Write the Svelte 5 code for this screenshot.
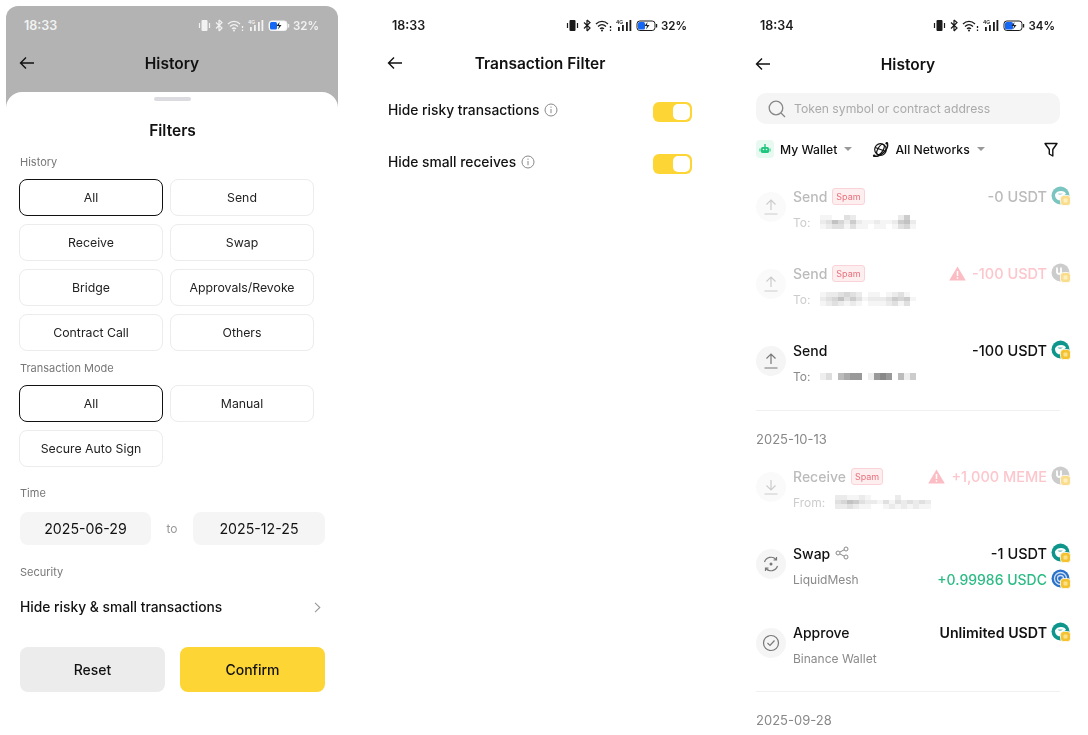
<script>
	const historyTypes = ['All', 'Send', 'Receive', 'Swap', 'Bridge', 'Approvals/Revoke', 'Contract Call', 'Others'];
	const modes = ['All', 'Manual', 'Secure Auto Sign'];
	const toggles = [
		{ label: 'Hide risky transactions', on: true },
		{ label: 'Hide small receives', on: true }
	];

	const UP = 'M9 13V3M4.5 7.5 9 3l4.5 4.5M2.5 17h13';
	const DOWN = 'M9 3v10M4.5 8.5 9 13l4.5-4.5M2.5 17h13';

	const rowsA = [
		{ title: 'Send', spam: true, icon: UP, to: 'To:', amount: '-0 USDT', tone: 'grey', token: 'teal', dim: true,
			mosaic: ['1100320000000250', '2364252112112562', '1233131101101341'], cell: 6 },
		{ title: 'Send', spam: true, icon: UP, to: 'To:', amount: '-100 USDT', tone: 'pink', warn: true, token: 'grey', dim: true,
			mosaic: ['1223432011012310', '2346353122235451', '1232121011123130'], cell: 6 },
		{ title: 'Send', icon: UP, to: 'To:', amount: '-100 USDT', tone: 'dark', token: 'teal',
			mosaic: ['1204566016760413', '1204566016760413'], cell: 6, thin: true }
	];

	const rowsB = [
		{ title: 'Receive', spam: true, icon: DOWN, to: 'From:', amount: '+1,000 MEME', tone: 'pink', warn: true, token: 'grey', dim: true,
			mosaic: ['2211210000200000', '3465322131323232', '2232110012121211'], cell: 6 }
	];
</script>

{#snippet status(time, pct, fill)}
	<div class="status">
		<span class="time">{time}</span>
		<div class="status-icons">
			<svg width="13" height="13" viewBox="0 0 13 13"><rect x="3.500" y="1" width="6" height="11" rx="1" fill="currentColor"/><path d="M1.500 4v5M11.500 4v5" stroke="currentColor" stroke-width="1.200"/></svg>
			<svg width="8" height="13" viewBox="0 0 8 13" fill="none" stroke="currentColor" stroke-width="1.200"><path d="M4 1v11M1 3.500l6 5.500-3 3M1 9.500l6-6-3-2.500"/></svg>
			<svg width="17" height="13" viewBox="0 0 17 13" fill="none" stroke="currentColor" stroke-width="1.300"><path d="M1 5c3.500-3.500 8.500-3.500 12 0M3 7.500c2.500-2.300 5.500-2.300 8 0M5 9.800c1.300-1 2.700-1 4 0"/><circle cx="7" cy="11.500" r="1" fill="currentColor" stroke="none"/><path d="M15.500 7v2M15.500 10.500v1.500"/></svg>
			<svg width="16" height="13" viewBox="0 0 16 13" fill="currentColor"><rect x="2" y="8" width="1.800" height="4"/><rect x="6" y="6" width="1.800" height="6"/><rect x="10" y="3" width="1.800" height="9"/><rect x="13.500" y="1" width="1.800" height="11"/><text x="0" y="5" class="g">4G</text></svg>
			<svg width="22" height="13" viewBox="0 0 22 13"><rect x="1" y="2" width="18" height="9.500" rx="2.800" fill="#fff" stroke="currentColor"/><rect x="2" y="3" width={fill} height="7.500" rx="1.500" fill="#1467f5"/><path d="M11.500 3 8.500 7H11L10 10.500 13.500 6H11z" fill="#222"/><rect x="20" y="5" width="1.200" height="3.500" fill="currentColor"/></svg>
			<span class="pct">{pct}</span>
		</div>
	</div>
{/snippet}

{#snippet nav(title)}
	<div class="nav">
		<svg class="back" width="16" height="14" viewBox="0 0 16 14" fill="none" stroke="#111" stroke-width="1.400"><path d="M15 7H1.500M7 1.500 1.500 7 7 12.500"/></svg>
		<h1>{title}</h1>
	</div>
{/snippet}

{#snippet token(kind, dim)}
	<svg class="token" class:dim width="20" height="20" viewBox="0 0 20 20">
		{#if kind === 'blue'}
			<circle cx="9.500" cy="9.500" r="9" fill="#2a71c9"/>
			<circle cx="9.500" cy="9.500" r="6" fill="none" stroke="#cfe0f5" stroke-width="1.300"/>
			<circle cx="9.500" cy="9.500" r="3" fill="none" stroke="#cfe0f5" stroke-width="1.300"/>
		{:else if kind === 'grey'}
			<circle cx="9.500" cy="9.500" r="9" fill="#a3a3a3"/>
			<path d="M6 4.500v5q2 3 4 0v-5" fill="none" stroke="#fff" stroke-width="1.800"/>
		{:else}
			<circle cx="9.500" cy="9.500" r="9" fill="#0f968c"/>
			<path d="M4 8.500C5 6 7.500 5 10 5s4.500 1 5 3l-4.500 2.500-2 4-1.500-.5C5 13 3.800 10.500 4 8.500z" fill="#fff"/>
			<path d="M6.500 7.500h5.500l-2 1.300H8z" fill="#5bb8b0"/>
		{/if}
		<rect x="9.500" y="9.500" width="10" height="10" rx="2.800" fill="#f4c22f" stroke="#fff" stroke-width=".8"/>
		<rect x="12.500" y="12.500" width="4" height="4" rx="1" fill="#fbe28a"/>
	</svg>
{/snippet}

{#snippet warning()}
	<svg width="17" height="15" viewBox="0 0 17 15"><path d="M8.500.5 16.800 14.500H.2z" fill="#fbbcc3"/><path d="M8.500 5v5M8.500 11.200v1.600" stroke="#fff" stroke-width="1.500"/></svg>
{/snippet}

{#snippet txRow(r)}
	<div class="tx" class:dim={r.dim}>
		<div class="tx-icon">
			<svg width="18" height="20" viewBox="0 0 18 20" fill="none" stroke="currentColor" stroke-width="1.200"><path d={r.icon}/></svg>
		</div>
		<div class="tx-body">
			<div class="tx-line">
				<span class="tx-title">{r.title}</span>
				{#if r.spam}<span class="spam">Spam</span>{/if}
				<span class="amount {r.tone}">
					{#if r.warn}{@render warning()}{/if}
					{r.amount}
				</span>
				{@render token(r.token, r.dim)}
			</div>
			<div class="tx-sub">
				<span>{r.to}</span>
				<div class="mosaic" class:thin={r.thin}>
					{#each r.mosaic as line}
						<div class="mosaic-line">
							{#each line.split('') as c}
								<i style="width:{r.cell}px;opacity:{Number(c) / 10}"></i>
							{/each}
						</div>
					{/each}
				</div>
			</div>
		</div>
	</div>
{/snippet}

<div class="page">
	<section class="phone filters">
		{@render status('18:33', '32%', 7)}
		{@render nav('History')}
		<div class="sheet">
			<div class="handle"></div>
			<h2>Filters</h2>
			<p class="label first">History</p>
			<div class="choices">
				{#each historyTypes as t, i}
					<button class:active={i === 0}>{t}</button>
				{/each}
			</div>
			<p class="label mode">Transaction Mode</p>
			<div class="choices">
				{#each modes as t, i}
					<button class:active={i === 0}>{t}</button>
				{/each}
			</div>
			<p class="label time-label">Time</p>
			<div class="dates">
				<span class="date">2025-06-29</span>
				<span class="to">to</span>
				<span class="date">2025-12-25</span>
			</div>
			<p class="label sec-label">Security</p>
			<div class="risk">
				<span>Hide risky &amp; small transactions</span>
				<svg width="7" height="11" viewBox="0 0 7 11" fill="none" stroke="#999" stroke-width="1.100"><path d="M1 .8 5.800 5.500 1 10.200"/></svg>
			</div>
			<div class="actions">
				<button class="reset">Reset</button>
				<button class="confirm">Confirm</button>
			</div>
		</div>
	</section>

	<section class="phone">
		{@render status('18:33', '32%', 7)}
		{@render nav('Transaction Filter')}
		<div class="toggles">
			{#each toggles as t}
				<div class="toggle-row">
					<span>{t.label}</span>
					<svg class="info" width="14" height="14" viewBox="0 0 14 14" fill="none" stroke="#888"><circle cx="7" cy="7" r="6"/><path d="M7 6v4.200M7 3.600v1.200"/></svg>
					<div class="toggle" class:on={t.on}><div class="knob"></div></div>
				</div>
			{/each}
		</div>
	</section>

	<section class="phone history">
		{@render status('18:34', '34%', 8)}
		{@render nav('History')}
		<div class="content">
			<div class="search">
				<svg width="18" height="18" viewBox="0 0 18 18" fill="none" stroke="#888" stroke-width="1.300"><circle cx="8" cy="8" r="6.800"/><path d="m13 13 4 4"/></svg>
				<span>Token symbol or contract address</span>
			</div>
			<div class="selectors">
				<span class="bot">
					<svg width="12" height="12" viewBox="0 0 12 12" fill="#1fc77e"><rect x="2" y="4" width="8" height="6" rx="1.500"/><rect x="5.300" y="1" width="1.400" height="3"/><rect x=".5" y="5.500" width="1" height="3"/><rect x="10.500" y="5.500" width="1" height="3"/><circle cx="4.500" cy="6.500" r=".8" fill="#e7f9f0"/><circle cx="7.500" cy="6.500" r=".8" fill="#e7f9f0"/></svg>
				</span>
				<span class="sel-label">My Wallet</span>
				<span class="caret"></span>
				<svg class="globe" width="17" height="17" viewBox="0 0 17 17" fill="none" stroke="#111" stroke-width="1.200"><circle cx="8.500" cy="8.500" r="5.800"/><ellipse cx="8.500" cy="8.500" rx="2.600" ry="5.800" transform="rotate(30 8.500 8.500)"/><path d="M3.200 6.500 13.800 10.500"/><path d="M1.800 14.800c2.500 1.500 7-.5 10-3.500s4.500-7 3.200-9.500" stroke-width="1.500"/><circle cx="14.800" cy="2.200" r="1.300" fill="#111" stroke="none"/><circle cx="2.200" cy="14.800" r="1.300" fill="#111" stroke="none"/></svg>
				<span class="sel-label">All Networks</span>
				<span class="caret"></span>
				<svg class="funnel" width="14" height="15" viewBox="0 0 14 15" fill="none" stroke="#111" stroke-width="1.400" stroke-linejoin="round"><path d="M1 1.500h12L8.800 7.500v6.500L5.300 12V7.500z"/></svg>
			</div>
			<div class="list top">
				{#each rowsA as r}
					{@render txRow(r)}
				{/each}
			</div>
			<div class="rule"></div>
			<p class="day">2025-10-13</p>
			<div class="list">
				{#each rowsB as r}
					{@render txRow(r)}
				{/each}

				<div class="tx swap">
					<div class="tx-icon">
						<svg width="20" height="20" viewBox="0 0 20 20" fill="none" stroke="currentColor" stroke-width="1.200"><path d="M3.500 8a6.800 6.800 0 0 1 11.500-2.500M16.500 12A6.800 6.800 0 0 1 5 14.500M15.500 3v3h-3M4.500 17v-3h3"/><circle cx="10" cy="10" r="1.500" fill="currentColor" stroke="none"/></svg>
					</div>
					<div class="tx-body">
						<div class="tx-line">
							<span class="tx-title">Swap</span>
							<svg class="share" width="14" height="14" viewBox="0 0 14 14" fill="none" stroke="#888"><circle cx="3" cy="7" r="2"/><circle cx="11" cy="3" r="2"/><circle cx="11" cy="11" r="2"/><path d="m5 6 4.200-2.200M5 8l4.200 2.200"/></svg>
							<span class="amount dark">-1 USDT</span>
							{@render token('teal', false)}
						</div>
						<div class="tx-sub swap-sub">
							<span>LiquidMesh</span>
							<span class="amount green">+0.99986 USDC</span>
							{@render token('blue', false)}
						</div>
					</div>
				</div>

				<div class="tx">
					<div class="tx-icon">
						<svg width="18" height="18" viewBox="0 0 18 18" fill="none" stroke="currentColor" stroke-width="1.200"><circle cx="9" cy="9" r="7.500"/><path d="m5.500 9 2.500 2.500 4.500-5"/></svg>
					</div>
					<div class="tx-body">
						<div class="tx-line">
							<span class="tx-title">Approve</span>
							<span class="amount dark strong">Unlimited USDT</span>
							{@render token('teal', false)}
						</div>
						<div class="tx-sub"><span>Binance Wallet</span></div>
					</div>
				</div>
			</div>
			<div class="rule second"></div>
			<p class="day">2025-09-28</p>
		</div>
	</section>
</div>

<style>
	:global(body) {
		margin: 0;
		background: #fff;
		font-family: 'Inter', 'Liberation Sans', sans-serif;
		color: #111;
	}
	.page {
		display: flex;
		gap: 36px;
		height: 735px;
		padding: 6px 0 0 6px;
		box-sizing: border-box;
		overflow: hidden;
		filter: blur(0.4px);
	}
	.phone {
		width: 332px;
		flex: none;
		display: flex;
		flex-direction: column;
	}
	.filters {
		background: #b3b3b3;
		border-radius: 12px 12px 0 0;
	}
	.status {
		height: 39px;
		padding: 0 19px 0 18px;
		display: flex;
		align-items: center;
		justify-content: space-between;
		font-size: 12.5px;
		font-weight: 600;
		color: #1a1a1a;
		box-sizing: border-box;
	}
	.filters .status {
		color: #f2f2f2;
	}
	.status-icons {
		display: flex;
		align-items: center;
		gap: 4px;
	}
	.pct {
		margin-left: -1px;
		font-size: 11.5px;
	}
	.g {
		font-size: 5px;
		font-weight: 600;
	}
	.nav {
		height: 36px;
		display: flex;
		align-items: center;
		justify-content: center;
		position: relative;
	}
	.back {
		position: absolute;
		left: 13px;
		top: 11px;
	}
	.nav h1 {
		margin: 0;
		font-size: 15.5px;
		font-weight: 600;
	}
	.filters .nav {
		height: 47px;
		padding-bottom: 11px;
		box-sizing: border-box;
	}
	.history .nav {
		margin-top: 1px;
	}

	.sheet {
		flex: 1;
		background: #fff;
		border-radius: 16px 16px 0 0;
		padding: 5px 13px 0 14px;
		display: flex;
		flex-direction: column;
	}
	.handle {
		width: 37px;
		height: 4px;
		border-radius: 2px;
		background: #dcdce0;
		align-self: center;
	}
	h2 {
		margin: 19px 0 0;
		font-size: 15.5px;
		line-height: 22px;
		font-weight: 600;
		text-align: center;
	}
	.label {
		margin: 0;
		font-size: 11px;
		line-height: 14px;
		color: #777;
	}
	.first {
		margin-top: 13px;
	}
	.mode {
		margin-top: 10px;
	}
	.time-label {
		margin-top: 19px;
	}
	.sec-label {
		margin-top: 20px;
	}
	.choices {
		display: grid;
		grid-template-columns: 144px 144px;
		gap: 8px 7px;
		margin: 10px 0 0 -1px;
	}
	.choices button {
		height: 37px;
		padding: 0;
		background: #fff;
		border: 1px solid #ececec;
		border-radius: 8px;
		font: 400 12.3px 'Inter', sans-serif;
		color: #222;
	}
	.choices button.active {
		border: 1.5px solid #111;
	}
	.dates {
		display: flex;
		align-items: center;
		justify-content: space-between;
		margin-top: 12px;
		font-size: 14.2px;
	}
	.date {
		width: 131px;
		height: 33px;
		line-height: 33px;
		text-align: center;
		background: #f5f5f5;
		border-radius: 8px;
	}
	.date:last-child {
		width: 132px;
	}
	.to {
		font-size: 12px;
		color: #999;
	}
	.risk {
		display: flex;
		align-items: center;
		justify-content: space-between;
		height: 20px;
		margin-top: 18px;
		padding-right: 4px;
		font-size: 13.8px;
		font-weight: 500;
	}
	.actions {
		display: flex;
		justify-content: space-between;
		margin-top: 30px;
	}
	.actions button {
		width: 145px;
		height: 45px;
		border: 0;
		border-radius: 8px;
		font: 500 14px 'Inter', sans-serif;
		color: #111;
	}
	.reset {
		background: #ececec;
	}
	.confirm {
		background: #fdd535;
	}

	.toggles {
		padding: 19px 14px 0;
		display: flex;
		flex-direction: column;
		gap: 32px;
	}
	.toggle-row {
		display: flex;
		align-items: center;
		gap: 5px;
		height: 20px;
		font-size: 13.8px;
		font-weight: 500;
	}
	.toggle {
		width: 39px;
		height: 20px;
		margin: 4px 0 0 auto;
		padding: 2px;
		box-sizing: border-box;
		border-radius: 6px;
		background: #fdd535;
		display: flex;
		justify-content: flex-end;
	}
	.knob {
		width: 17px;
		height: 16px;
		border-radius: 5px;
		background: #fff;
	}

	.content {
		padding: 0 14px;
		margin-top: 11px;
	}
	.search {
		height: 31px;
		display: flex;
		align-items: center;
		gap: 8px;
		padding-left: 12px;
		background: #f5f5f5;
		border-radius: 10px;
		font-size: 12.2px;
		color: #aaa;
	}
	.selectors {
		display: flex;
		align-items: center;
		height: 18px;
		margin-top: 16px;
		font-size: 12.2px;
		font-weight: 500;
	}
	.bot {
		width: 18px;
		height: 18px;
		border-radius: 4px;
		background: #e7f9f0;
		display: flex;
		align-items: center;
		justify-content: center;
	}
	.sel-label {
		margin-left: 6px;
	}
	.caret {
		width: 0;
		height: 0;
		margin: 0 20px 0 7px;
		border: 4px solid transparent;
		border-top: 4px solid #999;
		border-bottom: 0;
	}
	.funnel {
		margin-left: auto;
		margin-right: 2px;
	}
	.list {
		display: flex;
		flex-direction: column;
		gap: 30px;
		margin-right: -10px;
	}
	.list.top {
		margin-top: 27px;
	}
	.tx {
		display: flex;
		align-items: flex-start;
		gap: 7px;
		height: 47px;
	}
	.tx.swap {
		margin-bottom: 2px;
	}
	.tx-icon {
		width: 30px;
		height: 30px;
		flex: none;
		border-radius: 50%;
		background: #f5f5f5;
		color: #777;
		display: flex;
		align-items: center;
		justify-content: center;
		margin-top: 7px;
	}
	.tx-body {
		flex: 1;
		min-width: 0;
		margin-top: 1px;
	}
	.tx-line,
	.tx-sub {
		display: flex;
		align-items: center;
		gap: 4px;
		height: 20px;
	}
	.tx-line {
		font-size: 14px;
		font-weight: 500;
	}
	.tx-sub {
		margin-top: 6px;
		font-size: 12px;
		color: #8a8a8a;
	}
	.tx-title + .spam,
	.tx-title + .share {
		margin-left: 1px;
	}
	.spam {
		padding: 0 3px;
		height: 15px;
		line-height: 15px;
		font-size: 9px;
		font-weight: 400;
		color: #e8707c;
		background: #fdeef0;
		border: 1px solid #fad3d8;
		border-radius: 3px;
	}
	.amount {
		margin-left: auto;
		display: flex;
		align-items: center;
		gap: 6px;
		font-size: 14.5px;
		font-weight: 500;
	}
	.amount.grey {
		color: #bbb;
	}
	.amount.pink {
		color: #fcc6cc;
	}
	.amount.green {
		color: #2dbb85;
		font-size: 14px;
	}
	.amount.strong {
		font-weight: 600;
		font-size: 14.2px;
	}
	.dim .tx-title {
		color: #bbb;
	}
	.dim .tx-sub {
		color: #ccc;
	}
	.dim .tx-icon {
		background: #fafafa;
		color: #ccc;
	}
	.token {
		flex: none;
		margin-right: -1px;
	}
	.token.dim {
		opacity: 0.55;
	}
	.mosaic {
		margin-left: 6px;
	}
	.mosaic-line {
		display: flex;
		height: 4.500px;
	}
	.mosaic.thin .mosaic-line {
		height: 3.500px;
	}
	.mosaic i {
		display: block;
		height: 100%;
		background: #555;
	}
	.dim .mosaic i {
		background: #999;
	}
	.rule {
		height: 1px;
		background: #f0f0f0;
		margin-top: 24px;
	}
	.rule.second {
		margin-top: 23px;
	}
	.day {
		margin: 20px 0 0;
		font-size: 13px;
		line-height: 16px;
		color: #888;
	}
	.day + .list {
		margin-top: 18px;
	}
</style>
